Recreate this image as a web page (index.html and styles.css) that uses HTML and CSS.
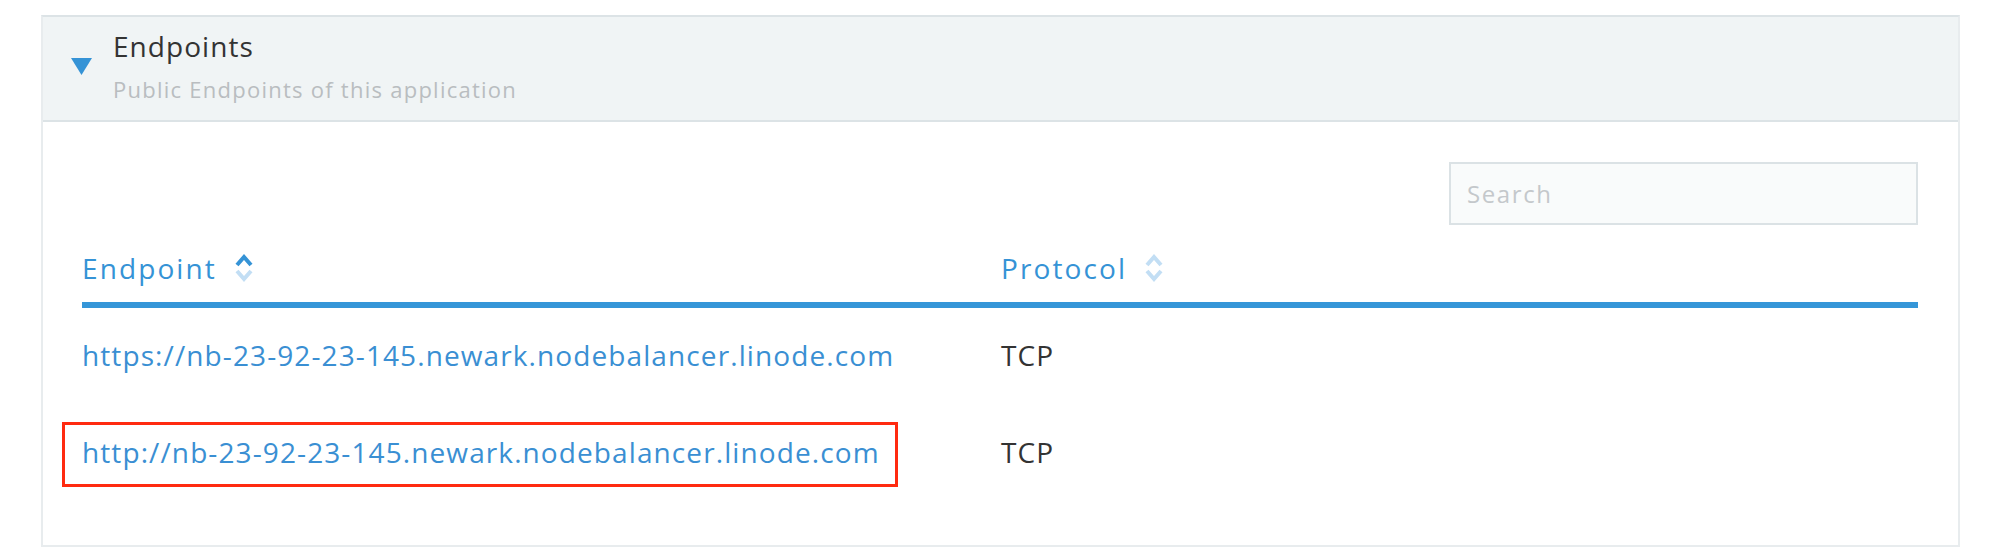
FILE: index.html
```html
<!DOCTYPE html>
<html lang="en">
<head>
<meta charset="utf-8">
<title>Endpoints</title>
<link rel="stylesheet" href="styles.css">
</head>
<body>
<section class="panel">
  <header class="panel-head">
    <svg class="caret" width="21" height="17" viewBox="0 0 21 17" aria-hidden="true"><polygon points="0,0 21,0 10.5,17" fill="#3593d6"/></svg>
    <div class="head-text">
      <h2 class="title">Endpoints</h2>
      <p class="subtitle">Public Endpoints of this application</p>
    </div>
  </header>
  <div class="panel-body">
    <div class="toolbar">
      <input class="search" type="text" placeholder="Search">
    </div>
    <div class="table">
      <div class="th">Endpoint
        <svg class="sort" width="20" height="30" viewBox="0 0 20 30" aria-hidden="true"><polyline points="3,12 10,4 17,12" fill="none" stroke="#3593d6" stroke-width="4"/><polyline points="3,18 10,26 17,18" fill="none" stroke="#c2def4" stroke-width="4"/></svg>
      </div>
      <div class="th">Protocol
        <svg class="sort" width="20" height="30" viewBox="0 0 20 30" aria-hidden="true"><polyline points="3,12 10,4 17,12" fill="none" stroke="#c2def4" stroke-width="4"/><polyline points="3,18 10,26 17,18" fill="none" stroke="#c2def4" stroke-width="4"/></svg>
      </div>
      <div class="td"><a class="link" href="#">https://nb-23-92-23-145.newark.nodebalancer.linode.com</a></div>
      <div class="td">TCP</div>
      <div class="td"><a class="link marked" href="#">http://nb-23-92-23-145.newark.nodebalancer.linode.com</a></div>
      <div class="td">TCP</div>
    </div>
  </div>
</section>
</body>
</html>
```
FILE: styles.css
```css
* { box-sizing: border-box; }
html, body { margin: 0; padding: 0; background: #fff; }
body {
  font-family: "Open Sans", "Liberation Sans", sans-serif;
  color: #333;
}
.panel {
  margin: 15px 40px 11px 41px;
  border: 2px solid #e8ecee;
  border-top-color: #dce3e6;
}
.panel-head {
  display: flex;
  align-items: center;
  gap: 21px;
  background: #f0f4f5;
  border-bottom: 2px solid #dce3e6;
  padding: 12px 20px 17px 28px;
}
.caret { display: block; flex: none; }
.title {
  margin: 0;
  font-size: 28px;
  line-height: 34px;
  font-weight: 400;
  color: #333;
  letter-spacing: 1.05px;
}
.subtitle {
  margin: 12px 0 0;
  font-size: 22px;
  line-height: 28px;
  color: #b9bdc0;
  letter-spacing: 1.25px;
}
.panel-body {
  padding: 40px 40px 43px 39px;
}
.toolbar {
  display: flex;
  justify-content: flex-end;
}
.search {
  width: 469px;
  height: 63px;
  border: 2px solid #dbe2e5;
  background: #f9fbfb;
  padding: 0 16px;
  font-family: inherit;
  font-size: 24px;
  color: #333;
  outline: none;
  letter-spacing: 1.6px;
}
.search::placeholder { color: #c4c8cb; }
.table {
  display: grid;
  grid-template-columns: 919px 1fr;
  margin-top: 26px;
}
.th {
  display: flex;
  align-items: center;
  font-size: 28px;
  line-height: 34px;
  color: #3593d6;
  padding-bottom: 17px;
  border-bottom: 6px solid #3596d8;
  letter-spacing: 2.1px;
}
.sort { display: block; margin-left: 17px; flex: none; }
.td {
  font-size: 28px;
  line-height: 34px;
  padding: 30px 0 33px;
  color: #333;
  letter-spacing: 1.1px;
}
.link {
  color: #3a8fd3;
  text-decoration: none;
  position: relative;
}
.marked::after {
  content: "";
  position: absolute;
  left: -20px;
  top: -11px;
  right: -18px;
  bottom: -16px;
  border: 3px solid #ff2a10;
}
```
